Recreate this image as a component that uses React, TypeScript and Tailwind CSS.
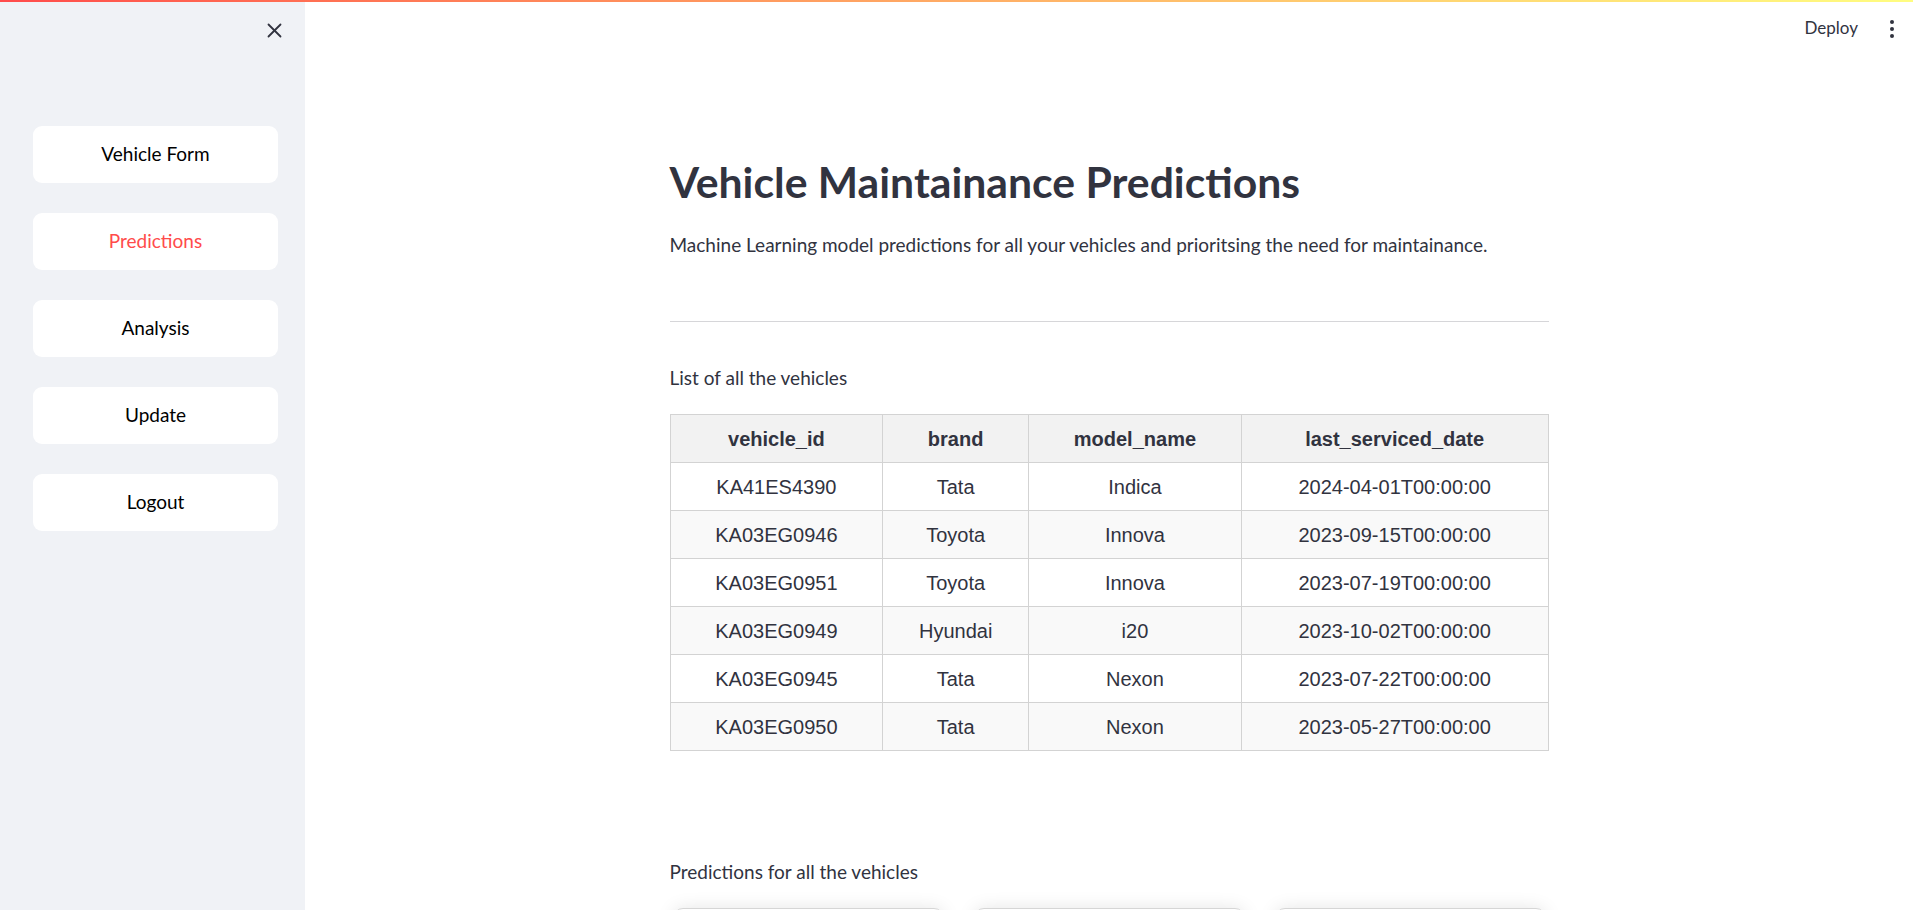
import React from 'react'

const navItems = ['Vehicle Form', 'Predictions', 'Analysis', 'Update', 'Logout']

const vehicles = [
  ['KA41ES4390', 'Tata', 'Indica', '2024-04-01T00:00:00'],
  ['KA03EG0946', 'Toyota', 'Innova', '2023-09-15T00:00:00'],
  ['KA03EG0951', 'Toyota', 'Innova', '2023-07-19T00:00:00'],
  ['KA03EG0949', 'Hyundai', 'i20', '2023-10-02T00:00:00'],
  ['KA03EG0945', 'Tata', 'Nexon', '2023-07-22T00:00:00'],
  ['KA03EG0950', 'Tata', 'Nexon', '2023-05-27T00:00:00'],
]

const columns = [
  { name: 'vehicle_id', w: 'w-[213px]' },
  { name: 'brand', w: 'w-[146px]' },
  { name: 'model_name', w: 'w-[213px]' },
  { name: 'last_serviced_date', w: 'w-[307px]' },
]

/* ─────────── Sidebar ─────────── */
function Sidebar() {
  return (
    <aside className="w-[305px] shrink-0 bg-[#f0f2f6] flex flex-col">
      <div className="h-[58px] flex items-start justify-end pr-[23px] pt-[20px]">
        <button className="h-[16px] w-[16px] flex items-center justify-center text-[#31333f]">
          <svg width="15" height="15" viewBox="0 0 15 15" fill="none" stroke="currentColor" strokeWidth="1.8" strokeLinecap="round">
            <path d="M1.5 1.5l12 12" />
            <path d="M13.5 1.5l-12 12" />
          </svg>
        </button>
      </div>
      <nav className="flex flex-col gap-[30px] px-[33px] pt-[66px]">
        {navItems.map((item) => (
          <button
            key={item}
            className={
              'h-[57px] w-[245px] rounded-[9px] bg-white text-[19px] ' +
              (item === 'Predictions' ? 'text-[#ff4b4b]' : 'text-black')
            }
          >
            {item}
          </button>
        ))}
      </nav>
    </aside>
  )
}

/* ─────────── Vehicle table ─────────── */
function VehicleTable() {
  return (
    <table className="border-collapse w-[879px] font-['Liberation_Sans',Arial,sans-serif] text-[20px] text-[#31333f]">
      <thead>
        <tr className="h-[48px] bg-[#f2f2f2]">
          {columns.map((c) => (
            <th key={c.name} className={'border border-[#d3d3d3] font-bold text-center ' + c.w}>
              {c.name}
            </th>
          ))}
        </tr>
      </thead>
      <tbody>
        {vehicles.map((row, i) => (
          <tr key={row[0]} className={'h-[48px] ' + (i % 2 === 1 ? 'bg-[#f9f9f9]' : 'bg-white')}>
            {row.map((cell, j) => (
              <td key={j} className="border border-[#d3d3d3] text-center">
                {cell}
              </td>
            ))}
          </tr>
        ))}
      </tbody>
    </table>
  )
}

/* ─────────── Main Page ─────────── */
export default function App() {
  return (
    <div className="h-screen w-full overflow-hidden flex flex-col bg-white font-['Lato',sans-serif] text-[#31333f]">
      <div className="h-[2px] shrink-0 bg-gradient-to-r from-[#ff4b4b] to-[#fffd80]" />
      <div className="flex flex-1 min-h-0">
        <Sidebar />
        <main className="flex-1 flex flex-col min-w-0">
          {/* Header */}
          <div className="h-[56px] shrink-0 flex items-start justify-end gap-[31px] pr-[18px] pt-[14px]">
            <button className="text-[17px] leading-[24px] text-[#31333f]">Deploy</button>
            <svg width="6" height="20" viewBox="0 0 6 20" fill="#31333f" className="mt-[3px]">
              <circle cx="3" cy="3" r="2" />
              <circle cx="3" cy="10" r="2" />
              <circle cx="3" cy="17" r="2" />
            </svg>
          </div>

          {/* Content */}
          <div className="w-[879px] mx-auto flex flex-col pt-[97px]">
            <h1 className="h-[54px] leading-[54px] text-[42.7px] font-bold text-[#31333f] whitespace-nowrap">
              Vehicle Maintainance Predictions
            </h1>
            <p className="mt-[22px] h-[28px] leading-[28px] text-[19px] whitespace-nowrap">
              Machine Learning model predictions for all your vehicles and prioritsing the need for maintainance.
            </p>
            <hr className="mt-[62px] border-0 border-t border-[#d6d6d9]" />
            <p className="mt-[42px] h-[28px] leading-[28px] text-[19px]">List of all the vehicles</p>
            <div className="mt-[22px]">
              <VehicleTable />
            </div>
            <p className="mt-[107px] h-[28px] leading-[28px] text-[19px]">Predictions for all the vehicles</p>
            <div className="mt-[22px] flex gap-[30px] px-[3px]">
              {[0, 1, 2].map((k) => (
                <div
                  key={k}
                  className="h-[200px] w-[271px] rounded-[10px] border border-[#d6d6d6] bg-white shadow-[0_0_18px_rgba(0,0,0,0.1)]"
                />
              ))}
            </div>
          </div>
        </main>
      </div>
    </div>
  )
}
